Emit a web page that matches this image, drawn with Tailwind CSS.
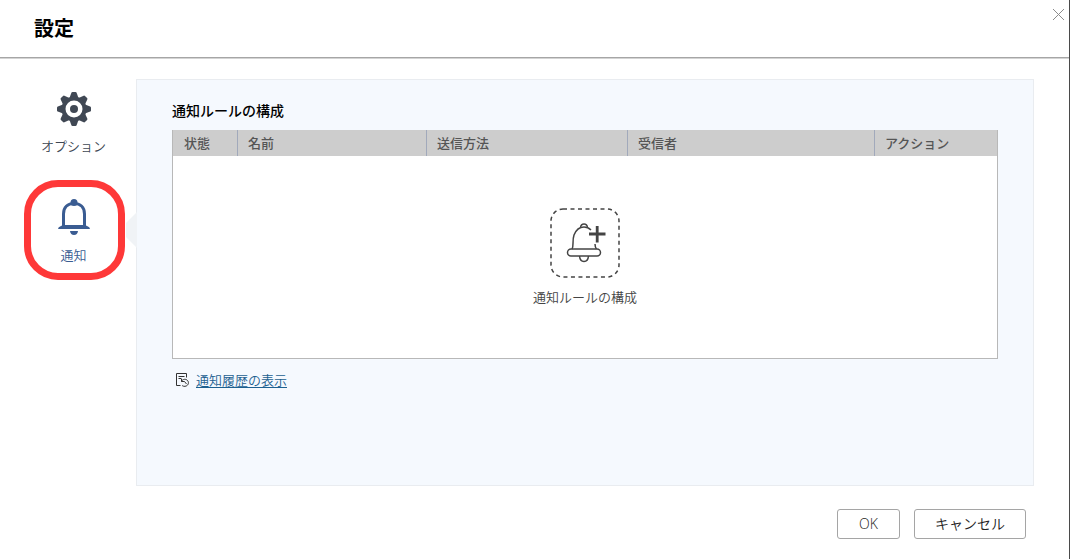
<!DOCTYPE html>
<html lang="ja">

<head>
    <meta charset="UTF-8">
    <meta name="viewport" content="width=device-width, initial-scale=1.0">
    <title>設定</title>
    <script src="https://cdn.jsdelivr.net/npm/@tailwindcss/browser@4"></script>
</head>

<body class="bg-white font-['Open_Sans','Noto_Sans_CJK_JP',sans-serif] font-[350] text-[13px] leading-5 text-[#404854]">

    <div class="min-h-screen flex flex-col border-r border-[#4a4a4a]">

        <header class="flex items-start justify-between h-[58px] border-b border-[#a6a6a6] shadow-[0_1px_0_#d4d4d4]">
            <h1 class="pl-[34px] pt-[15px] text-xl leading-7 font-bold text-black">設定</h1>
            <button type="button" aria-label="閉じる" class="pt-[9px] pr-[5px]">
                <svg class="w-[11px] h-[11px]" viewBox="0 0 11 11" fill="none" stroke="#8c8c8c">
                    <path d="M0 0L11 11M11 0L0 11" />
                </svg>
            </button>
        </header>

        <div class="flex grow pt-[21px] pr-[35px]">

            <!-- side menu -->
            <nav class="w-[136px] shrink-0 flex flex-col pl-6 pr-[11px]">
                <button type="button" class="flex flex-col items-center gap-[9px] h-[101px] pt-3 pr-0.5 text-[#404854]">
                    <svg class="w-9 h-9" viewBox="-18 -18 36 36" fill="#404854">
                        <g id="teeth">
                            <path id="tooth" d="M-4.5 -11L-2.6 -16.2Q-2.3 -17 -1.5 -17H1.5Q2.3 -17 2.6 -16.2L4.5 -11Z" />
                            <use href="#tooth" transform="rotate(45)" />
                            <use href="#tooth" transform="rotate(90)" />
                            <use href="#tooth" transform="rotate(135)" />
                        </g>
                        <use href="#teeth" transform="rotate(180)" />
                        <circle r="10.5" fill="none" stroke="#404854" stroke-width="4" />
                        <circle r="4" />
                    </svg>
                    <span>オプション</span>
                </button>
                <div class="relative">
                    <button type="button"
                        class="w-full h-[100px] flex flex-col items-center gap-2.5 pt-3 pr-0.5 border-7 border-[#fe3838] rounded-[34px] text-[#3a5c92]">
                        <svg class="w-8 h-9" viewBox="0 0 32 36" fill="#3a5c92">
                            <circle cx="16" cy="3.5" r="3.5" />
                            <path d="M5.500 27V15C5.500 8 10 4.500 16 4.500S26.500 8 26.500 15V27" fill="none" stroke="#3a5c92"
                                stroke-width="3" />
                            <path d="M0 30Q0 28 3 27L5 26H27L29 27Q32 28 32 30Z" />
                            <path d="M12 32H20Q19.500 36 16 36T12 32Z" />
                        </svg>
                        <span>通知</span>
                    </button>
                    <svg class="absolute right-[-12px] top-8 w-3 h-9" viewBox="0 0 12 36">
                        <path d="M12 0L1 11V25L12 36Z" fill="#f0f3f6" />
                    </svg>
                </div>
            </nav>

            <main class="grow h-[407px] px-[35px] pt-[21px] bg-[#f5f9fe] border border-[#e9ecf0]">
                <h2 class="text-sm leading-5 font-medium text-black pb-[9px]">通知ルールの構成</h2>
                <table class="w-full table-fixed border-separate border-spacing-0 border border-t-0 border-[#b8b8b8] bg-white">
                    <thead class="text-left text-[#555]">
                        <tr class="h-[26px] bg-[#cdcdcd] *:font-medium">
                            <th class="w-[64px] pl-[11px]">状態</th>
                            <th class="w-[189px] pl-2.5 border-l border-[#a1a9bb]">名前</th>
                            <th class="w-[201px] pl-2.5 border-l border-[#a1a9bb]">送信方法</th>
                            <th class="w-[247px] pl-2.5 border-l border-[#a1a9bb]">受信者</th>
                            <th class="pl-2.5 border-l border-[#a1a9bb]">アクション</th>
                        </tr>
                    </thead>
                    <tbody>
                        <tr>
                            <td colspan="5" class="h-[202px] align-top pt-[52px]">
                                <button type="button" class="mx-auto flex flex-col items-center gap-[9px] text-[#444]">
                                    <svg class="w-[70px] h-[70px]" viewBox="0 0 70 70" fill="none" stroke="#444"
                                        stroke-width="1.500">
                                        <rect x="1" y="1" width="68" height="68" rx="12" stroke-dasharray="4 3.500" />
                                        <path
                                            d="M22 41C24 38 22 33 24 27C26 22 30 19 34 19C37 19 39 20 41 22M45 36Q45 39 46.500 41" />
                                        <path d="M30.500 19.500Q31 16 34 16T37.500 19.500" />
                                        <rect x="17.500" y="41" width="33" height="7" rx="3.500" />
                                        <path d="M29.500 48Q30 53.500 34 53.500T38.500 48" />
                                        <path d="M39 26H55.500M47.200 18V34.500" stroke-width="2.800" />
                                    </svg>
                                    <span>通知ルールの構成</span>
                                </button>
                            </td>
                        </tr>
                    </tbody>
                </table>
                <div class="flex items-center gap-[7px] pt-[11px] pl-1">
                    <svg class="w-[13px] h-[14px]" viewBox="0 0 13 14" fill="none" stroke="#333">
                        <path d="M4.500 12.500H.5V.5H10.500V4.500" />
                        <path d="M2.500 3.500H8.500M2.500 5.500H5" />
                        <path d="M5.500 5.500V8.500H8.500M5.500 8.500C6.500 6 10 5.500 11.700 7.700S12 13 9 13.300C7.500 13.400 6.700 13 6 12.300" />
                        <path d="M8.500 8.500L10.500 11" />
                    </svg>
                    <a href="#" class="text-[#1c6090] underline underline-offset-2">通知履歴の表示</a>
                </div>
            </main>
        </div>

        <footer class="flex justify-end gap-3.5 pr-[43px] pb-5 text-sm text-[#222]">
            <button type="button" class="w-[63px] h-[30px] border border-[#a5a5a5] rounded-[3px] bg-white">OK</button>
            <button type="button" class="w-28 h-[30px] border border-[#a5a5a5] rounded-[3px] bg-white">キャンセル</button>
        </footer>
    </div>

</body>

</html>
